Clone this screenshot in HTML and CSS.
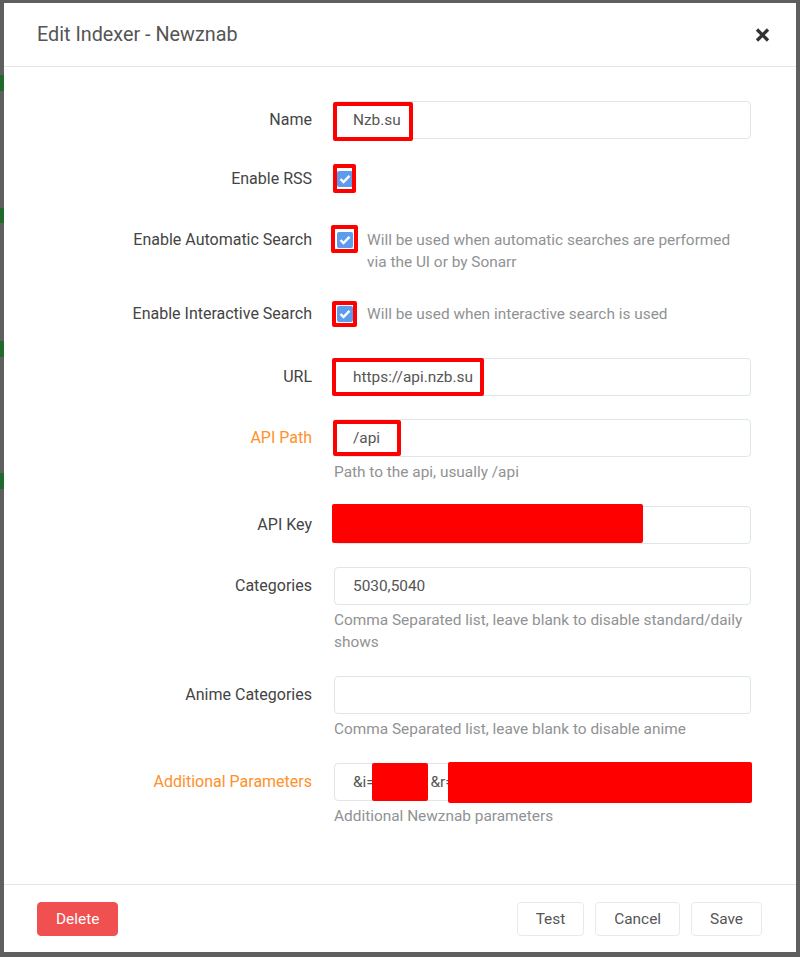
FILE: index.html
```html
<!DOCTYPE html>
<html lang="en">
<head>
  <meta charset="UTF-8">
  <title>Edit Indexer - Newznab</title>
  <link rel="stylesheet" href="styles.css">
</head>
<body>
  <div class="modal">
    <!-- Header -->
    <header class="modal-header">
      <h1>Edit Indexer - Newznab</h1>
      <button class="close" aria-label="Close">
        <svg width="15" height="14" viewBox="0 0 15 14"><path d="M2 1.5 L13 12.5 M13 1.5 L2 12.5" stroke="#333" stroke-width="3.3"/></svg>
      </button>
    </header>

    <!-- Form -->
    <div class="modal-body">
      <div class="form-group">
        <label class="form-label">Name</label>
        <div class="form-input">
          <div class="input-wrap">
            <input type="text" value="Nzb.su">
            <span class="mark mark-name"></span>
          </div>
        </div>
      </div>

      <div class="form-group check-group">
        <label class="form-label">Enable RSS</label>
        <div class="form-input">
          <span class="checkbox">
            <svg width="12" height="10" viewBox="0 0 12 10"><path d="M1.5 5 L4.5 8 L10.5 1.8" fill="none" stroke="#fff" stroke-width="2.4"/></svg>
            <span class="mark mark-rss"></span>
          </span>
        </div>
      </div>

      <div class="form-group check-group">
        <label class="form-label">Enable Automatic Search</label>
        <div class="form-input">
          <span class="checkbox">
            <svg width="12" height="10" viewBox="0 0 12 10"><path d="M1.5 5 L4.5 8 L10.5 1.8" fill="none" stroke="#fff" stroke-width="2.4"/></svg>
            <span class="mark mark-auto"></span>
          </span>
          <span class="check-help">Will be used when automatic searches are performed via the UI or by Sonarr</span>
        </div>
      </div>

      <div class="form-group check-group">
        <label class="form-label">Enable Interactive Search</label>
        <div class="form-input">
          <span class="checkbox">
            <svg width="12" height="10" viewBox="0 0 12 10"><path d="M1.5 5 L4.5 8 L10.5 1.8" fill="none" stroke="#fff" stroke-width="2.4"/></svg>
            <span class="mark mark-inter"></span>
          </span>
          <span class="check-help">Will be used when interactive search is used</span>
        </div>
      </div>

      <div class="form-group">
        <label class="form-label">URL</label>
        <div class="form-input">
          <div class="input-wrap">
            <input type="text" value="https://api.nzb.su">
            <span class="mark mark-url"></span>
          </div>
        </div>
      </div>

      <div class="form-group">
        <label class="form-label advanced">API Path</label>
        <div class="form-input">
          <div class="input-wrap">
            <input type="text" value="/api">
            <span class="mark mark-path"></span>
          </div>
          <div class="help">Path to the api, usually /api</div>
        </div>
      </div>

      <div class="form-group">
        <label class="form-label">API Key</label>
        <div class="form-input">
          <div class="input-wrap">
            <input type="text" value="">
            <span class="fill fill-key"></span>
          </div>
        </div>
      </div>

      <div class="form-group">
        <label class="form-label">Categories</label>
        <div class="form-input">
          <div class="input-wrap">
            <input type="text" value="5030,5040">
          </div>
          <div class="help">Comma Separated list, leave blank to disable standard/daily shows</div>
        </div>
      </div>

      <div class="form-group">
        <label class="form-label">Anime Categories</label>
        <div class="form-input">
          <div class="input-wrap">
            <input type="text" value="">
          </div>
          <div class="help">Comma Separated list, leave blank to disable anime</div>
        </div>
      </div>

      <div class="form-group">
        <label class="form-label advanced">Additional Parameters</label>
        <div class="form-input">
          <div class="input-wrap">
            <input type="text" value="&amp;i=123456 &amp;r=0000000000000000000000000000">
            <span class="fill fill-param-i"></span>
            <span class="fill fill-param-r"></span>
          </div>
          <div class="help">Additional Newznab parameters</div>
        </div>
      </div>
    </div>

    <!-- Footer -->
    <footer class="modal-footer">
      <button class="btn btn-danger">Delete</button>
      <div class="footer-right">
        <button class="btn">Test</button>
        <button class="btn">Cancel</button>
        <button class="btn">Save</button>
      </div>
    </footer>
  </div>
</body>
</html>
```

FILE: styles.css
```css
/* Page behind the modal */
body {
  margin: 0;
  padding: 3px 4px 5px;
  background:
    linear-gradient(#5f5f5f 0 75px, #1f6b2b 75px 91px, #5f5f5f 91px 208px, #1f6b2b 208px 223px,
      #5f5f5f 223px 341px, #1f6b2b 341px 357px, #5f5f5f 357px 473px, #1f6b2b 473px 489px, #5f5f5f 489px)
      left top / 4px 100% no-repeat,
    #5f5f5f;
  font-family: Roboto, "Liberation Sans", sans-serif;
  font-size: 15.4px;
  color: #515253;
}

/* Modal */
.modal {
  background: #fff;
  height: 949px;
  display: flex;
  flex-direction: column;
}

.modal-header {
  height: 63px;
  border-bottom: 1px solid #e5e5e5;
  display: flex;
  align-items: center;
  justify-content: space-between;
  padding: 0 26px 0 33px;
}
.modal-header h1 {
  margin: 0;
  font-size: 19.8px;
  font-weight: 400;
  color: #555;
}
.close {
  border: none;
  background: transparent;
  padding: 0;
  display: flex;
  cursor: pointer;
}

/* Form */
.modal-body {
  flex: 1;
  padding: 34px 0 0 30px;
}
.form-group {
  display: grid;
  grid-template-columns: 278px 417px;
  column-gap: 22px;
  margin-bottom: 23px;
}
.form-label {
  text-align: right;
  font-size: 16px;
  line-height: 22px;
  padding-top: 8px;
  color: #444;
}
.form-label.advanced {
  color: #ff902b;
}

.input-wrap {
  position: relative;
}
input[type="text"] {
  box-sizing: border-box;
  width: 100%;
  height: 38px;
  padding: 0 18px;
  border: 1px solid #dde6e9;
  border-radius: 4px;
  font: inherit;
  color: #555;
  outline: none;
}
.help {
  color: #909293;
  line-height: 22px;
  margin-top: 4px;
}

/* Checkboxes */
.check-group .form-label {
  padding-top: 6px;
}
.check-group .form-input {
  display: flex;
  align-items: flex-start;
  padding-top: 6px;
  min-height: 32px;
}
.checkbox {
  position: relative;
  flex: none;
  width: 16px;
  height: 16px;
  margin: 3px 14px 0 3px;
  background: #5d9cec;
  border-radius: 2px;
  display: flex;
  align-items: center;
  justify-content: center;
}
.check-help {
  color: #909293;
  line-height: 22px;
  padding-bottom: 1px;
}

/* Red annotations drawn over the screenshot */
.mark {
  position: absolute;
  box-sizing: border-box;
  border: 4px solid #ff0000;
  border-radius: 2px;
}
.mark-name { left: -1px; top: 1px; width: 80px; height: 39px; }
.mark-url { left: -2px; top: 0; width: 152px; height: 38px; }
.mark-path { left: -1px; top: 1px; width: 68px; height: 36px; }
.mark-rss { left: -4px; top: -7px; width: 23px; height: 29px; }
.mark-auto { left: -6px; top: -7px; width: 27px; height: 28px; }
.mark-inter { left: -5px; top: -5px; width: 25px; height: 26px; }

.fill {
  position: absolute;
  background: #ff0000;
  border-radius: 2px;
}
.fill-key { left: -2px; top: -2px; width: 311px; height: 39px; }
.fill-param-i { left: 38px; top: 0; width: 56px; height: 38px; }
.fill-param-r { left: 114px; top: -1px; width: 304px; height: 41px; }

/* Footer */
.modal-footer {
  border-top: 1px solid #e5e5e5;
  padding: 17px 34px 16px 33px;
  display: flex;
  justify-content: space-between;
}
.footer-right {
  display: flex;
  gap: 11px;
}
.btn {
  height: 34px;
  padding: 0 18px;
  border: 1px solid #eaeaea;
  border-radius: 4px;
  background: #fff;
  color: #555;
  font: inherit;
  cursor: pointer;
}
.btn-danger {
  background: #f05050;
  border-color: #f05050;
  color: #fff;
}
```
